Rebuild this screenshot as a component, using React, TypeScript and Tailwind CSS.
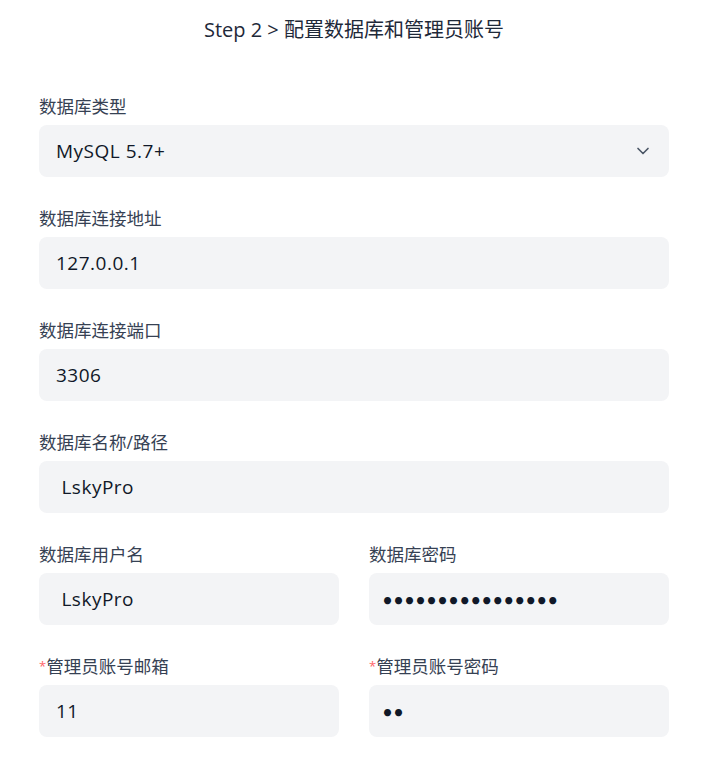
import React from "react";
import { ChevronDown } from "lucide-react";

const font = { fontFamily: '"Open Sans", "Noto Sans CJK SC", sans-serif' };

const inputCls =
	"w-full h-[52px] px-[17px] bg-[#f3f4f6] rounded-lg text-[19px] tracking-[0.5px] text-gray-900 outline-none border-0";

const pwdCls =
	"w-full h-[52px] pl-[13px] pr-[17px] bg-[#f3f4f6] rounded-lg text-[19px] text-gray-900 outline-none border-0 font-['Lato']";

const Field: React.FC<{ label: string; required?: boolean; children: React.ReactNode }> = ({
	label,
	required,
	children,
}) => (
	<div className="flex flex-col gap-[7px] flex-1 min-w-0">
		<label className="text-[17.5px] leading-6 text-gray-700">
			{required && <span className="text-[13px] align-[2px] text-red-400">*</span>}
			{label}
		</label>
		{children}
	</div>
);

const App: React.FC = () => {
	return (
		<div className="min-h-screen bg-white" style={font}>
			<div className="pl-[39px] pr-[45px] pt-4 pb-6">
				<h2 className="text-center text-[20px] leading-7 text-gray-800 mb-[50px]">
					Step 2 &gt; 配置数据库和管理员账号
				</h2>

				<div className="flex flex-col gap-[29px]">
					<Field label="数据库类型">
						<div className={inputCls + " flex items-center justify-between"}>
							<span>MySQL 5.7+</span>
							<ChevronDown className="w-5 h-5 text-gray-600 mr-[-1px]" strokeWidth={2} />
						</div>
					</Field>

					<Field label="数据库连接地址">
						<input className={inputCls} defaultValue="127.0.0.1" />
					</Field>

					<Field label="数据库连接端口">
						<input className={inputCls} defaultValue="3306" />
					</Field>

					<Field label="数据库名称/路径">
						<input className={inputCls} defaultValue=" LskyPro" />
					</Field>

					<div className="flex gap-[30px]">
						<Field label="数据库用户名">
							<input className={inputCls} defaultValue=" LskyPro" />
						</Field>
						<Field label="数据库密码">
							<input className={pwdCls} type="password" defaultValue="abcdefghijklmnop" />
						</Field>
					</div>

					<div className="flex gap-[30px]">
						<Field label="管理员账号邮箱" required>
							<input className={inputCls} defaultValue="11" />
						</Field>
						<Field label="管理员账号密码" required>
							<input className={pwdCls} type="password" defaultValue="11" />
						</Field>
					</div>
				</div>
			</div>
		</div>
	);
};

export default App;
